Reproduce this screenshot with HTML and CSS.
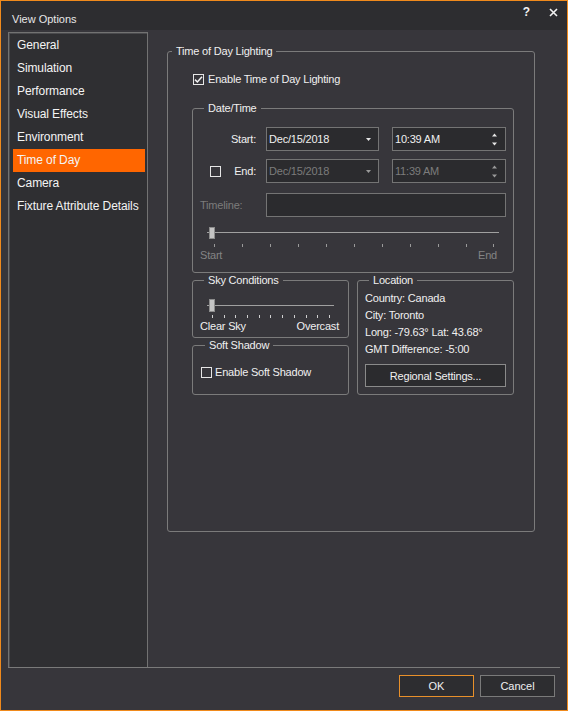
FILE: index.html
```html
<!DOCTYPE html>
<html lang="en">
<head>
    <meta charset="UTF-8">
    <title>View Options</title>
    <link rel="stylesheet" href="styles.css">
</head>
<body>
    <div class="window">
        <div class="titlebar">
            <span class="title">View Options</span>
            <div class="tb-actions">
                <span class="tb-btn help">?</span>
                <span class="tb-btn">
                    <svg width="9" height="9" viewBox="0 0 9 9"><path d="M1 1L8 8M8 1L1 8" stroke="#f2f2f2" stroke-width="1.6"/></svg>
                </span>
            </div>
        </div>

        <div class="main">
            <ul class="nav">
                <li>General</li>
                <li>Simulation</li>
                <li>Performance</li>
                <li>Visual Effects</li>
                <li>Environment</li>
                <li class="active">Time of Day</li>
                <li>Camera</li>
                <li>Fixture Attribute Details</li>
            </ul>

            <div class="page">
                <fieldset class="group outer">
                    <legend>Time of Day Lighting</legend>
                    <label class="check-row enable-row">
                        <span class="checkbox">
                            <svg width="9" height="9" viewBox="0 0 9 9"><path d="M1 4.6L3.4 7L8 1.8" fill="none" stroke="#f2f2f2" stroke-width="1.5"/></svg>
                        </span>
                        Enable Time of Day Lighting
                    </label>

                    <div class="inner">
                        <fieldset class="group datetime">
                            <legend>Date/Time</legend>

                            <div class="dt-row first">
                                <span class="dt-label">Start:</span>
                                <div class="field date">
                                    <span class="value">Dec/15/2018</span>
                                    <svg class="drop" width="5" height="3" viewBox="0 0 5 3"><path d="M0 0H5L2.5 3Z" fill="#e6e6e6"/></svg>
                                </div>
                                <div class="field time">
                                    <span class="value">10:39 AM</span>
                                    <svg class="spin" width="5" height="13" viewBox="0 0 5 13"><path d="M0 3.5H5L2.5 0.5Z M0 9.5H5L2.5 12.5Z" fill="#e6e6e6"/></svg>
                                </div>
                            </div>

                            <div class="dt-row">
                                <span class="dt-label end-label">
                                    <span class="checkbox"></span>
                                    <span class="end-text">End:</span>
                                </span>
                                <div class="field date disabled">
                                    <span class="value">Dec/15/2018</span>
                                    <svg class="drop" width="5" height="3" viewBox="0 0 5 3"><path d="M0 0H5L2.5 3Z" fill="#9a9a9a"/></svg>
                                </div>
                                <div class="field time disabled">
                                    <span class="value">11:39 AM</span>
                                    <svg class="spin" width="5" height="13" viewBox="0 0 5 13"><path d="M0 3.5H5L2.5 0.5Z M0 9.5H5L2.5 12.5Z" fill="#9a9a9a"/></svg>
                                </div>
                            </div>

                            <div class="dt-row timeline-row">
                                <span class="timeline-label">Timeline:</span>
                                <div class="field timeline"></div>
                            </div>

                            <svg class="slider time-slider" width="305" height="25" viewBox="0 0 305 25">
                                <line x1="7" y1="9.5" x2="299" y2="9.5" stroke="#a0a0a0"/>
                                <g stroke="#9a9a9a">
                                    <line x1="14.5" y1="21" x2="14.5" y2="24"/>
                                    <line x1="42.5" y1="21" x2="42.5" y2="24"/>
                                    <line x1="70.5" y1="21" x2="70.5" y2="24"/>
                                    <line x1="98.5" y1="21" x2="98.5" y2="24"/>
                                    <line x1="126.5" y1="21" x2="126.5" y2="24"/>
                                    <line x1="154.5" y1="21" x2="154.5" y2="24"/>
                                    <line x1="182.5" y1="21" x2="182.5" y2="24"/>
                                    <line x1="210.5" y1="21" x2="210.5" y2="24"/>
                                    <line x1="238.5" y1="21" x2="238.5" y2="24"/>
                                    <line x1="266.5" y1="21" x2="266.5" y2="24"/>
                                    <line x1="293.5" y1="21" x2="293.5" y2="24"/>
                                </g>
                                <rect x="9.5" y="4.5" width="5" height="11" fill="#c4c4c4" stroke="#8c8c8c"/>
                            </svg>
                            <div class="slider-labels time-labels">
                                <span>Start</span>
                                <span>End</span>
                            </div>
                        </fieldset>

                        <div class="split">
                            <div class="left-col">
                                <fieldset class="group sky">
                                    <legend>Sky Conditions</legend>
                                    <svg class="slider sky-slider" width="141" height="24" viewBox="0 0 141 24">
                                        <line x1="7" y1="10.5" x2="134" y2="10.5" stroke="#a0a0a0"/>
                                        <g stroke="#d0d0d0">
                                            <line x1="12.5" y1="20" x2="12.5" y2="23"/>
                                            <line x1="24.5" y1="20" x2="24.5" y2="23"/>
                                            <line x1="35.5" y1="20" x2="35.5" y2="23"/>
                                            <line x1="47.5" y1="20" x2="47.5" y2="23"/>
                                            <line x1="59.5" y1="20" x2="59.5" y2="23"/>
                                            <line x1="70.5" y1="20" x2="70.5" y2="23"/>
                                            <line x1="82.5" y1="20" x2="82.5" y2="23"/>
                                            <line x1="94.5" y1="20" x2="94.5" y2="23"/>
                                            <line x1="106.5" y1="20" x2="106.5" y2="23"/>
                                            <line x1="117.5" y1="20" x2="117.5" y2="23"/>
                                            <line x1="129.5" y1="20" x2="129.5" y2="23"/>
                                        </g>
                                        <rect x="9.5" y="4.5" width="5" height="12" fill="#c4c4c4" stroke="#8c8c8c"/>
                                    </svg>
                                    <div class="slider-labels sky-labels">
                                        <span>Clear Sky</span>
                                        <span>Overcast</span>
                                    </div>
                                </fieldset>

                                <fieldset class="group shadow">
                                    <legend>Soft Shadow</legend>
                                    <label class="check-row shadow-row">
                                        <span class="checkbox"></span>
                                        Enable Soft Shadow
                                    </label>
                                </fieldset>
                            </div>

                            <fieldset class="group location">
                                <legend>Location</legend>
                                <div class="loc-lines">
                                    <div>Country: Canada</div>
                                    <div>City: Toronto</div>
                                    <div>Long: -79.63° Lat: 43.68°</div>
                                    <div>GMT Difference: -5:00</div>
                                </div>
                                <button class="btn-regional">Regional Settings...</button>
                            </fieldset>
                        </div>
                    </div>
                </fieldset>
            </div>
        </div>

        <div class="footer">
            <button class="btn btn-ok">OK</button>
            <button class="btn">Cancel</button>
        </div>
    </div>
</body>
</html>
```

FILE: styles.css
```css
* {
    margin: 0;
    padding: 0;
    box-sizing: border-box;
}

body {
    background: #37363b;
    font-family: "Liberation Sans", Arial, sans-serif;
    font-size: 11px;
    color: #f0f0f0;
}

.window {
    width: 568px;
    height: 711px;
    border: 1px solid #f08a1c;
    background: #37363b;
    display: flex;
    flex-direction: column;
}

/* title bar */
.titlebar {
    height: 29px;
    background: #2d2d30;
    display: flex;
    flex-shrink: 0;
}

.title {
    padding: 11px 0 0 11px;
    line-height: 14px;
    color: #e8e8e8;
}

.tb-actions {
    margin-left: auto;
    display: flex;
}

.tb-btn {
    width: 27px;
    height: 22px;
    display: flex;
    align-items: center;
    justify-content: center;
    color: #f2f2f2;
}

.tb-btn.help {
    font-size: 12px;
    font-weight: bold;
}

/* body */
.main {
    flex: 1;
    display: flex;
    padding: 2px 0 0 7px;
}

.nav {
    width: 140px;
    list-style: none;
    background: #2f2f32;
    border: 1px solid #727272;
    border-bottom: none;
    box-shadow: inset 1px 1px 0 #4a4a4d;
    padding: 1px 2px 0 4px;
    font-size: 12px;
    letter-spacing: -0.1px;
}

.nav li {
    height: 23px;
    line-height: 23px;
    padding-left: 4px;
    color: #f4f4f4;
    white-space: nowrap;
}

.nav li.active {
    background: #ff6600;
}

.page {
    flex: 1;
    padding: 12px 0 0 19px;
    letter-spacing: -0.2px;
}

/* group boxes */
.group {
    border: 1px solid #7b7b7b;
    border-radius: 3px;
    padding: 0;
}

.group legend {
    margin-left: 4px;
    padding: 0 4px;
    line-height: 14px;
}

.outer {
    width: 368px;
    height: 488px;
}

.check-row {
    display: flex;
    align-items: center;
    height: 14px;
    line-height: 14px;
}

.checkbox {
    width: 11px;
    height: 11px;
    border: 1px solid #e6e6e6;
    display: flex;
    align-items: center;
    justify-content: center;
    flex-shrink: 0;
}

.enable-row {
    margin: 14px 0 0 25px;
    gap: 4px;
}

.inner {
    margin: 15px 0 0 24px;
    width: 322px;
}

/* date / time */
.datetime {
    width: 322px;
    padding: 0 6px 10px 7px;
}

.dt-row {
    display: flex;
    align-items: center;
    height: 24px;
    margin-top: 8px;
}

.dt-row.first {
    margin-top: 12px;
}

.dt-row.timeline-row {
    margin-top: 10px;
}

.dt-label {
    width: 56px;
    text-align: right;
    flex-shrink: 0;
}

.end-label {
    display: flex;
    align-items: center;
}

.end-label .checkbox {
    margin-left: 10px;
}

.end-text {
    margin-left: auto;
}

.timeline-label {
    width: 66px;
    color: #7c7c7c;
    flex-shrink: 0;
}

.field {
    height: 24px;
    border: 1px solid #747474;
    background: #2b2b2e;
    display: flex;
    align-items: center;
    padding-left: 2px;
}

.field .value {
    flex: 1;
}

.field.date {
    width: 113px;
    margin-left: 10px;
}

.field.time {
    width: 114px;
    margin-left: 13px;
}

.field.timeline {
    width: 240px;
}

.field.disabled {
    color: #7c7c7c;
}

.drop {
    margin-right: 7px;
}

.spin {
    margin-right: 8px;
}

.slider {
    display: block;
}

.time-slider {
    margin-top: 6px;
}

.slider-labels {
    display: flex;
    justify-content: space-between;
    line-height: 14px;
}

.time-labels {
    width: 297px;
    color: #848484;
}

/* lower groups */
.split {
    display: flex;
    gap: 8px;
}

.left-col {
    width: 157px;
    display: flex;
    flex-direction: column;
}

.sky {
    padding: 0 6px 4px 7px;
}

.sky-slider {
    margin-top: 8px;
}

.sky-labels {
    width: 139px;
}

.shadow {
    flex: 1;
    padding: 0 6px 0 8px;
}

.shadow-row {
    margin-top: 13px;
    gap: 3px;
}

.location {
    width: 157px;
    padding: 0 7px 7px 7px;
}

.loc-lines {
    margin-top: 3px;
    line-height: 17px;
}

.btn-regional {
    display: block;
    width: 141px;
    height: 23px;
    margin-top: 6px;
    border: 1px solid #8a8a8a;
    background: #2b2b2e;
    color: #f0f0f0;
    font-family: inherit;
    font-size: 11px;
    letter-spacing: -0.2px;
}

/* footer */
.footer {
    height: 43px;
    flex-shrink: 0;
    margin: 0 7px;
    border-top: 1px solid #7a7a7a;
    display: flex;
    justify-content: flex-end;
    gap: 6px;
    padding: 7px 5px 0 0;
}

.btn {
    width: 75px;
    height: 22px;
    border: 1px solid #7a7a7a;
    background: #2d2d30;
    color: #f0f0f0;
    font-family: inherit;
    font-size: 11px;
}

.btn-ok {
    border-color: #e8902a;
}
```
